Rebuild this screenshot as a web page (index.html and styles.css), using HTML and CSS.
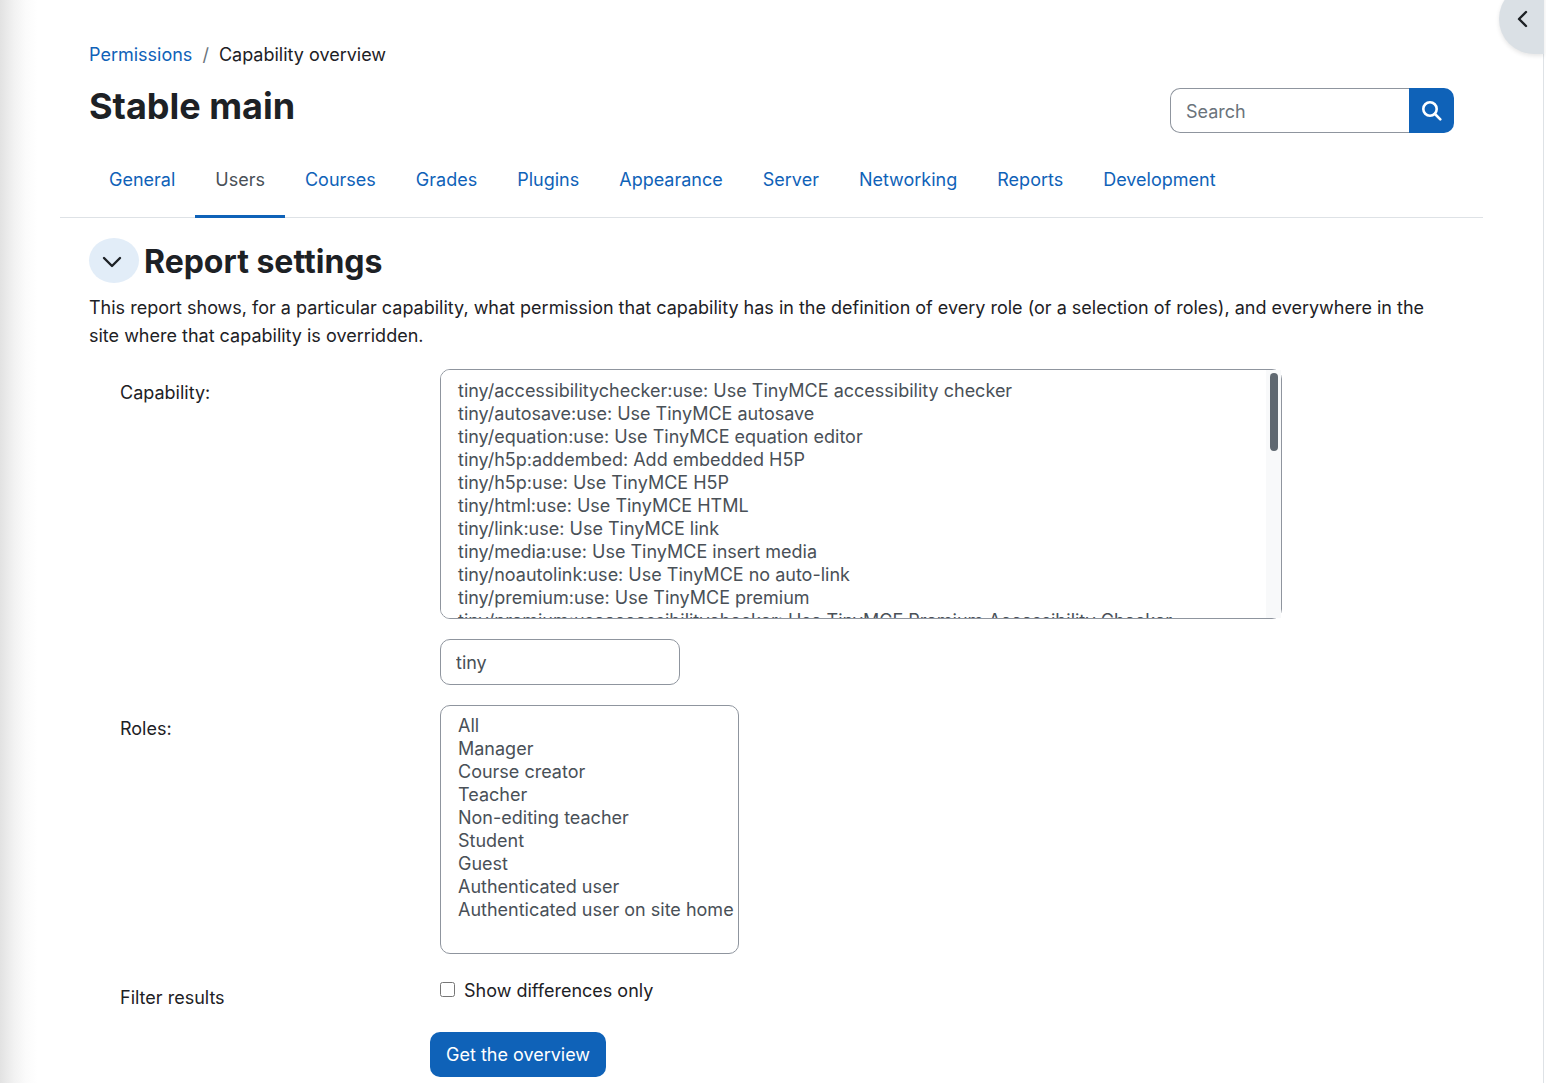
FILE: index.html
```html
<!DOCTYPE html>
<html lang="en">
<head>
    <meta charset="UTF-8">
    <meta name="viewport" content="width=device-width, initial-scale=1">
    <title>Capability overview</title>
    <link rel="stylesheet" href="styles.css">
</head>
<body>
    <button class="drawer-toggle" aria-label="Open block drawer">
        <svg viewBox="0 0 12 18" width="12" height="18"><path d="M10 2 L3 9 L10 16" /></svg>
    </button>

    <div class="page">
        <div class="inset">
            <nav class="breadcrumb" aria-label="Breadcrumb">
                <a href="#">Permissions</a>
                <span class="divider">/</span>
                <span>Capability overview</span>
            </nav>

            <header class="header">
                <h1>Stable main</h1>
                <form class="search">
                    <input type="text" placeholder="Search" aria-label="Search">
                    <button type="submit" aria-label="Search">
                        <svg viewBox="0 0 20 20" width="20" height="20"><circle cx="8" cy="8" r="6.7" /><path d="M13 13 L18.3 18.3" /></svg>
                    </button>
                </form>
            </header>
        </div>

        <nav class="tabs" aria-label="Administration">
            <a href="#">General</a>
            <a href="#" class="active">Users</a>
            <a href="#">Courses</a>
            <a href="#">Grades</a>
            <a href="#">Plugins</a>
            <a href="#">Appearance</a>
            <a href="#">Server</a>
            <a href="#">Networking</a>
            <a href="#">Reports</a>
            <a href="#">Development</a>
        </nav>

        <main class="inset">
            <div class="section-title">
                <button class="collapse" aria-label="Collapse report settings" aria-expanded="true">
                    <svg viewBox="0 0 20 12" width="20" height="12"><path d="M2 2 L10 10 L18 2" /></svg>
                </button>
                <h2>Report settings</h2>
            </div>
            <p class="intro">This report shows, for a particular capability, what permission that capability has in the definition of every role (or a selection of roles), and everywhere in the site where that capability is overridden.</p>

            <form class="settings">
                <div class="row">
                    <label for="capability">Capability:</label>
                    <div class="field">
                        <div class="capability">
                            <select id="capability" size="10">
                                <option>tiny/accessibilitychecker:use: Use TinyMCE accessibility checker</option>
                                <option>tiny/autosave:use: Use TinyMCE autosave</option>
                                <option>tiny/equation:use: Use TinyMCE equation editor</option>
                                <option>tiny/h5p:addembed: Add embedded H5P</option>
                                <option>tiny/h5p:use: Use TinyMCE H5P</option>
                                <option>tiny/html:use: Use TinyMCE HTML</option>
                                <option>tiny/link:use: Use TinyMCE link</option>
                                <option>tiny/media:use: Use TinyMCE insert media</option>
                                <option>tiny/noautolink:use: Use TinyMCE no auto-link</option>
                                <option>tiny/premium:use: Use TinyMCE premium</option>
                                <option>tiny/premium:useaccessibilitychecker: Use TinyMCE Premium Accessibility Checker</option>
                            </select>
                            <div class="scrollbar"><div class="thumb"></div></div>
                        </div>
                        <input type="text" class="filter" value="tiny" aria-label="Filter capabilities">
                    </div>
                </div>

                <div class="row">
                    <label for="roles">Roles:</label>
                    <div class="field">
                        <select id="roles" class="roles" size="10" multiple>
                            <option>All</option>
                            <option>Manager</option>
                            <option>Course creator</option>
                            <option>Teacher</option>
                            <option>Non-editing teacher</option>
                            <option>Student</option>
                            <option>Guest</option>
                            <option>Authenticated user</option>
                            <option>Authenticated user on site home</option>
                        </select>
                    </div>
                </div>

                <div class="row">
                    <span class="label" id="filter-label">Filter results</span>
                    <div class="field" role="group" aria-labelledby="filter-label">
                        <div class="check">
                            <input type="checkbox" id="onlydiff">
                            <label for="onlydiff">Show differences only</label>
                        </div>
                    </div>
                </div>

                <button type="submit" class="submit">Get the overview</button>
            </form>
        </main>
    </div>
</body>
</html>
```
FILE: styles.css
```css
* {
    box-sizing: border-box;
}

body {
    margin: 0;
    overflow-x: hidden;
    background: linear-gradient(to right, #e2e2e2, #f2f2f2 14px, #fbfbfb 26px, #fff 38px);
    color: #1d2125;
    font-family: Inter, "Liberation Sans", sans-serif;
    font-size: 18px;
    line-height: 28px;
}

a {
    color: #0f62b8;
    text-decoration: none;
}

button, input, select {
    font: inherit;
}

svg {
    display: block;
    fill: none;
    stroke: currentColor;
    stroke-linecap: round;
    stroke-linejoin: round;
}

.page {
    min-height: 100vh;
    margin-right: 2px;
    padding: 41px 60px 0;
    border-right: 1px solid #dee2e6;
}

.inset {
    padding: 0 29px;
}

.breadcrumb {
    display: flex;
    gap: 10px;
}

.divider {
    color: #6a737b;
}

.header {
    display: flex;
    justify-content: space-between;
    align-items: flex-start;
    padding-top: 15px;
}

h1, h2 {
    margin: 0;
    font-weight: 700;
}

h1 {
    font-size: 36px;
    line-height: 44px;
}

h2 {
    font-size: 32px;
    line-height: 48px;
}

.search {
    display: flex;
    width: 284px;
    margin-top: 4px;
}

.search input {
    flex: 1;
    min-width: 0;
    height: 45px;
    padding: 2px 15px 0;
    border: 1px solid #8f959e;
    border-right: 0;
    border-radius: 10px 0 0 10px;
    color: #495057;
}

.search input::placeholder {
    color: #6a737b;
}

.search button {
    width: 45px;
    padding: 0 0 0 13px;
    border: 0;
    border-radius: 0 10px 10px 0;
    background: #0f62b8;
    color: #fff;
    stroke-width: 2.6;
}

.tabs {
    display: flex;
    margin-top: 9px;
    padding: 0 29px;
    border-bottom: 1px solid #dee2e6;
}

.tabs a {
    height: 76px;
    margin-bottom: -1px;
    padding: 24px 20px 0;
    border-bottom: 3px solid transparent;
}

.tabs a.active {
    border-color: #0f62b8;
    color: #495057;
}

.section-title {
    display: flex;
    align-items: flex-start;
    gap: 5px;
    padding-top: 20px;
}

.collapse {
    width: 50px;
    height: 45px;
    padding: 2px 0 0 13px;
    border: 0;
    border-radius: 50%;
    background: #e2edf8;
    color: #1d2125;
    stroke-width: 2.4;
}

.intro {
    margin: 8px 0 19px;
}

.settings {
    padding-left: 31px;
}

.row {
    display: flex;
    margin-bottom: 20px;
}

.row > label,
.label {
    width: 320px;
    padding-top: 10px;
}

.field {
    flex: 1;
    display: flex;
    flex-direction: column;
    align-items: flex-start;
    gap: 20px;
}

select {
    display: block;
    height: 249px;
    padding: 9px 0 8px 15px;
    border: 1px solid #8f959e;
    border-radius: 10px;
    background: #fff;
    color: #495057;
}

option {
    min-height: 23px;
}

.capability {
    position: relative;
    width: 83%;
}

.capability select {
    width: 100%;
    height: 250px;
    padding-top: 10px;
    scrollbar-width: none;
}

.scrollbar {
    position: absolute;
    top: 1px;
    right: 1px;
    bottom: 1px;
    width: 15px;
    padding: 3px 3px 3px 4px;
    background: #f8f9fa;
    pointer-events: none;
}

.thumb {
    height: 78px;
    border-radius: 4px;
    background: #5f6871;
}

.roles {
    width: 299px;
}

.filter {
    width: 240px;
    height: 46px;
    padding: 0 15px;
    border: 1px solid #8f959e;
    border-radius: 10px;
    color: #495057;
}

.check {
    display: flex;
    align-items: center;
    gap: 9px;
    padding: 3px 0 5px;
}

.check input {
    width: 15px;
    height: 15px;
    margin: 0 0 3px;
}

.submit {
    display: block;
    height: 45px;
    margin-left: 310px;
    padding: 0 16px;
    border: 0;
    border-radius: 10px;
    background: #0f62b8;
    color: #fff;
}

.drawer-toggle {
    position: absolute;
    top: -16px;
    right: 2px;
    width: 45px;
    height: 70px;
    padding: 0 0 0 17px;
    border: 0;
    border-radius: 35px 0 0 35px;
    background: #dae0e5;
    box-shadow: 0 2px 4px rgba(0, 0, 0, 0.1);
    color: #1d2125;
    stroke-width: 2.4;
}
```
